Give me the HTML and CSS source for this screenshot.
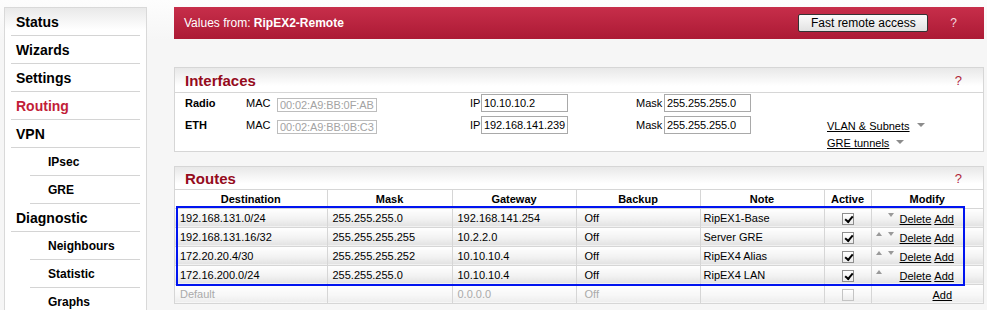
FILE: index.html
```html
<!DOCTYPE html>
<html lang="en">

<head>
    <meta charset="UTF-8">
    <meta name="viewport" content="width=device-width, initial-scale=1.0">
    <title>RipEX - Routing</title>
    <link rel="stylesheet" href="styles.css">
</head>

<body>
    <div class="page">
        <nav class="menu">
            <a class="menu-item" href="#">Status</a>
            <a class="menu-item" href="#">Wizards</a>
            <a class="menu-item" href="#">Settings</a>
            <a class="menu-item active" href="#">Routing</a>
            <a class="menu-item" href="#">VPN</a>
            <a class="menu-item sub" href="#">IPsec</a>
            <a class="menu-item sub" href="#">GRE</a>
            <a class="menu-item" href="#">Diagnostic</a>
            <a class="menu-item sub" href="#">Neighbours</a>
            <a class="menu-item sub" href="#">Statistic</a>
            <a class="menu-item sub" href="#">Graphs</a>
        </nav>

        <main class="content">
            <div class="topbar">
                <div class="source">Values from: <b>RipEX2-Remote</b></div>
                <button class="btn-remote">Fast remote access</button>
                <span class="help">?</span>
            </div>

            <section class="panel interfaces">
                <div class="panel-head">
                    <h2>Interfaces</h2>
                    <span class="help">?</span>
                </div>
                <div class="iface-body">
                    <div class="iface-rows">
                        <div class="iface-row">
                            <span class="iface-name">Radio</span>
                            <span class="lbl lbl-mac">MAC</span>
                            <input class="field mac" value="00:02:A9:BB:0F:AB" disabled>
                            <span class="lbl lbl-ip">IP</span>
                            <input class="field ip" value="10.10.10.2">
                            <span class="lbl lbl-mask">Mask</span>
                            <input class="field ip" value="255.255.255.0">
                        </div>
                        <div class="iface-row">
                            <span class="iface-name">ETH</span>
                            <span class="lbl lbl-mac">MAC</span>
                            <input class="field mac" value="00:02:A9:BB:0B:C3" disabled>
                            <span class="lbl lbl-ip">IP</span>
                            <input class="field ip" value="192.168.141.239">
                            <span class="lbl lbl-mask">Mask</span>
                            <input class="field ip" value="255.255.255.0">
                        </div>
                    </div>
                    <div class="iface-links">
                        <div><a href="#">VLAN &amp; Subnets</a><span class="caret"></span></div>
                        <div><a href="#">GRE tunnels</a><span class="caret"></span></div>
                    </div>
                </div>
            </section>

            <section class="panel routes">
                <div class="panel-head">
                    <h2>Routes</h2>
                    <span class="help">?</span>
                </div>
                <table class="route-table">
                    <colgroup>
                        <col style="width: 152px">
                        <col style="width: 125px">
                        <col style="width: 124px">
                        <col style="width: 124px">
                        <col style="width: 124px">
                        <col style="width: 47px">
                        <col style="width: 112px">
                    </colgroup>
                    <thead>
                        <tr>
                            <th>Destination</th>
                            <th>Mask</th>
                            <th>Gateway</th>
                            <th>Backup</th>
                            <th>Note</th>
                            <th>Active</th>
                            <th>Modify</th>
                        </tr>
                    </thead>
                    <tbody>
                        <tr>
                            <td>192.168.131.0/24</td>
                            <td>255.255.255.0</td>
                            <td>192.168.141.254</td>
                            <td class="c-backup">Off</td>
                            <td class="c-note">RipEX1-Base</td>
                            <td class="c-active"><span class="check on"></span></td>
                            <td>
                                <div class="modify">
                                    <span class="arrow-slot"></span>
                                    <span class="arrow-slot"><span class="arrow down"></span></span>
                                    <a href="#">Delete</a>
                                    <a href="#">Add</a>
                                </div>
                            </td>
                        </tr>
                        <tr>
                            <td>192.168.131.16/32</td>
                            <td>255.255.255.255</td>
                            <td>10.2.2.0</td>
                            <td class="c-backup">Off</td>
                            <td class="c-note">Server GRE</td>
                            <td class="c-active"><span class="check on"></span></td>
                            <td>
                                <div class="modify">
                                    <span class="arrow-slot"><span class="arrow up"></span></span>
                                    <span class="arrow-slot"><span class="arrow down"></span></span>
                                    <a href="#">Delete</a>
                                    <a href="#">Add</a>
                                </div>
                            </td>
                        </tr>
                        <tr>
                            <td>172.20.20.4/30</td>
                            <td>255.255.255.252</td>
                            <td>10.10.10.4</td>
                            <td class="c-backup">Off</td>
                            <td class="c-note">RipEX4 Alias</td>
                            <td class="c-active"><span class="check on"></span></td>
                            <td>
                                <div class="modify">
                                    <span class="arrow-slot"><span class="arrow up"></span></span>
                                    <span class="arrow-slot"><span class="arrow down"></span></span>
                                    <a href="#">Delete</a>
                                    <a href="#">Add</a>
                                </div>
                            </td>
                        </tr>
                        <tr>
                            <td>172.16.200.0/24</td>
                            <td>255.255.255.0</td>
                            <td>10.10.10.4</td>
                            <td class="c-backup">Off</td>
                            <td class="c-note">RipEX4 LAN</td>
                            <td class="c-active"><span class="check on"></span></td>
                            <td>
                                <div class="modify">
                                    <span class="arrow-slot"><span class="arrow up"></span></span>
                                    <span class="arrow-slot"></span>
                                    <a href="#">Delete</a>
                                    <a href="#">Add</a>
                                </div>
                            </td>
                        </tr>
                        <tr class="default-row">
                            <td>Default</td>
                            <td></td>
                            <td>0.0.0.0</td>
                            <td class="c-backup">Off</td>
                            <td class="c-note"></td>
                            <td class="c-active"><span class="check"></span></td>
                            <td>
                                <div class="modify">
                                    <span class="arrow-slot"></span>
                                    <span class="arrow-slot"></span>
                                    <span class="link-gap"></span>
                                    <a href="#">Add</a>
                                </div>
                            </td>
                        </tr>
                    </tbody>
                </table>
                <div class="highlight"></div>
            </section>
        </main>
    </div>
</body>

</html>
```

FILE: styles.css
```css
* {
    margin: 0;
    padding: 0;
    box-sizing: border-box;
}

body {
    font-family: 'Liberation Sans', Arial, sans-serif;
    font-size: 11px;
    color: #000;
    background: #f6f6f6 linear-gradient(#fdfdfd, #f6f6f6 40px) no-repeat;
    overflow: hidden;
}

a {
    color: #000;
}

.page {
    display: flex;
    align-items: flex-start;
    padding: 7px 3px 0 4px;
}

/* left menu */

.menu {
    flex-shrink: 0;
    width: 143px;
    height: 330px;
    padding: 0 6px;
    background: linear-gradient(#e9e9e9, #fff 22px);
    border: 1px solid #d9d9d9;
}

.menu-item {
    display: block;
    height: 28px;
    line-height: 28px;
    padding-left: 5px;
    border-bottom: 1px solid #d4d4d4;
    font-size: 14px;
    font-weight: bold;
    color: #000;
    text-decoration: none;
}

.menu-item.active {
    color: #c21d38;
}

.menu-item.sub {
    margin-left: 19px;
    padding-left: 18px;
    font-size: 12px;
}

/* main column */

.content {
    width: 810px;
    margin-left: 27px;
}

.topbar {
    display: flex;
    align-items: center;
    height: 32px;
    padding-left: 10px;
    background: linear-gradient(#c72e4a, #ac1a35);
    color: #fff;
    font-size: 12px;
}

.source {
    flex: 1;
}

.btn-remote {
    width: 130px;
    height: 18px;
    font: 12px 'Liberation Sans', Arial, sans-serif;
    color: #000;
    background: linear-gradient(#fbfbfb, #e2e2e2);
    border: 1px solid #333;
    border-radius: 2px;
}

.topbar .help {
    margin: 0 27px 0 22px;
    font-size: 12px;
    color: #f4dde1;
}

.panel {
    position: relative;
    margin-top: 28px;
    background: #fff;
    border: 1px solid #d6d6d6;
}

.panel.routes {
    margin-top: 14px;
}

.panel-head {
    display: flex;
    align-items: center;
    justify-content: space-between;
    height: 25px;
    padding: 0 21px 0 10px;
    background: linear-gradient(#e8e8e8, #fff 75%);
    border-bottom: 1px solid #d6d6d6;
}

.routes .panel-head {
    height: 23px;
}

.panel-head h2 {
    font-size: 15px;
    color: #950b1d;
}

.panel-head .help {
    font-size: 13px;
    color: #b0253a;
}

/* interfaces */

.iface-body {
    display: flex;
    height: 58px;
    padding: 1px 0 0 10px;
}

.iface-rows {
    display: flex;
    flex-direction: column;
    gap: 4px;
}

.iface-row {
    display: flex;
    align-items: center;
    height: 18px;
}

.iface-name {
    width: 61px;
    font-weight: bold;
}

.lbl-mac {
    width: 31px;
}

.lbl-ip {
    width: 11px;
    margin-left: 93px;
}

.lbl-mask {
    width: 28px;
    margin-left: 68px;
}

.field {
    height: 18px;
    padding: 0 0 0 2px;
    font: 11px 'Liberation Sans', Arial, sans-serif;
    letter-spacing: -0.1px;
    color: #000;
    background: #fff;
    border: 1px solid #a9a9a9;
    outline: none;
}

.field.ip {
    width: 87px;
}

.field.mac {
    align-self: flex-end;
    width: 100px;
    height: 14px;
    color: #a3a3a3;
    border-color: #bdbdbd;
}

.iface-links {
    margin: 24px 0 0 76px;
    line-height: 17px;
}

.caret {
    display: inline-block;
    margin-left: 7px;
    vertical-align: 3px;
    border-left: 4px solid transparent;
    border-right: 4px solid transparent;
    border-top: 4px solid #8c8c8c;
}

/* routes */

.route-table {
    width: 100%;
    table-layout: fixed;
    border-collapse: collapse;
}

.route-table th {
    height: 18px;
    font-size: 11px;
    font-weight: bold;
    background: #fff;
    border: 1px solid #d6d6d6;
    border-top: none;
}

.route-table td {
    height: 19px;
    padding: 0 4px 0 5px;
    white-space: nowrap;
    background: linear-gradient(#fff, #f3f3f3 55%, #e2e2e2);
    border: 1px solid #d6d6d6;
}

.route-table tr> :first-child {
    border-left: none;
}

.route-table tr> :last-child {
    border-right: none;
}

.route-table tbody tr:last-child td {
    border-bottom: none;
}

.route-table td.c-backup {
    padding-left: 8px;
}

.route-table td.c-note {
    padding-left: 3px;
}

.route-table td.c-active {
    padding: 0;
    text-align: center;
}

.default-row td {
    color: #aaa;
    background: linear-gradient(#fff, #f7f7f7 60%, #ededed);
}

.check {
    display: inline-block;
    width: 12px;
    height: 12px;
    margin-top: 3px;
    vertical-align: top;
    background: linear-gradient(#fff, #ececec);
    border: 1px solid #8e8e8e;
}

.check.on::after {
    content: "";
    display: block;
    width: 6px;
    height: 3px;
    margin: 2px 0 0 2px;
    border-left: 2px solid #000;
    border-bottom: 2px solid #000;
    transform: rotate(-50deg);
}

.default-row .check {
    border-color: #c4c4c4;
}

.modify {
    display: flex;
    align-items: flex-start;
    height: 18px;
    margin-left: -1px;
    padding-top: 4px;
}

.modify a {
    line-height: 13px;
    margin-right: 3px;
}

.arrow-slot {
    width: 12px;
    height: 8px;
}

.arrow {
    display: block;
    width: 0;
    border-left: 3.5px solid transparent;
    border-right: 3.5px solid transparent;
}

.arrow.up {
    border-bottom: 4px solid #999;
}

.arrow.down {
    border-top: 4px solid #999;
}

.link-gap {
    width: 33px;
}

.highlight {
    position: absolute;
    left: 1px;
    top: 39px;
    width: 789px;
    height: 80px;
    border: 2px solid #0014f0;
    pointer-events: none;
}
```
